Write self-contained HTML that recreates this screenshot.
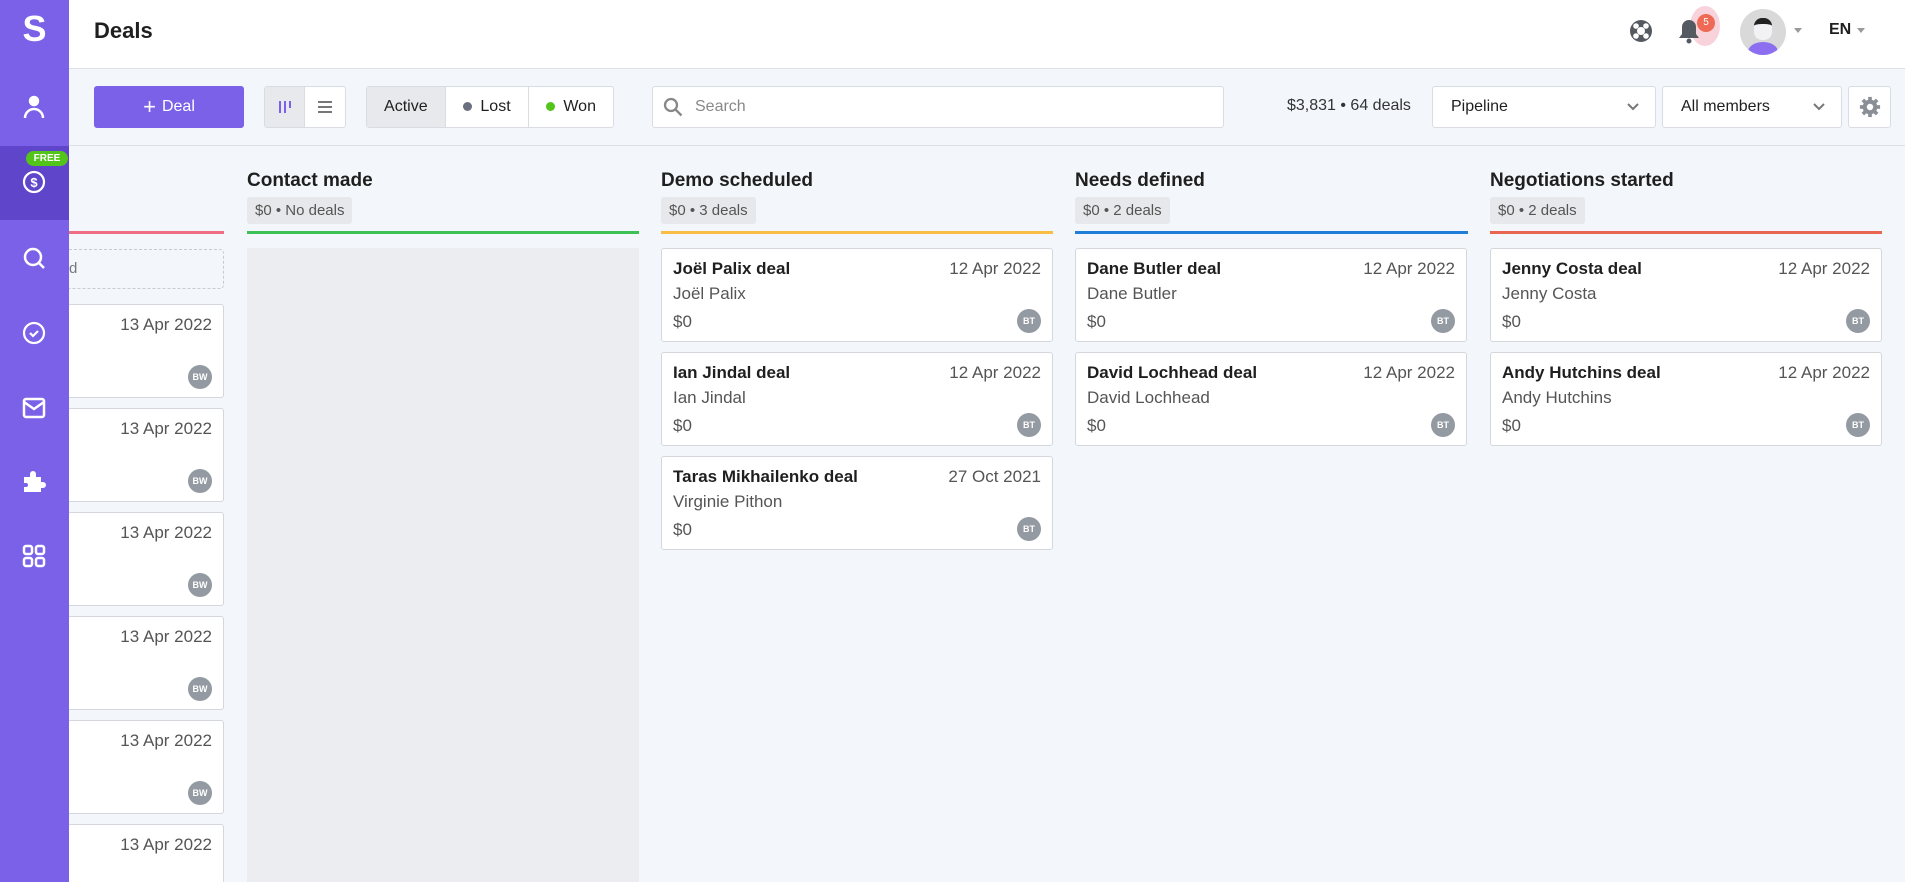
<!DOCTYPE html>
<html><head><meta charset="utf-8"><style>
*{box-sizing:border-box;margin:0;padding:0}
html,body{width:1905px;height:882px;overflow:hidden}
body{background:#f3f7fb;font-family:"Liberation Sans",sans-serif;color:#1f1f1f}
#w{position:relative;width:1905px;height:882px;overflow:hidden}
.sb{position:absolute;left:0;top:0;width:69px;height:882px;background:#7b61e8;z-index:20}
.sb .act{position:absolute;left:0;top:146px;width:69px;height:74px;background:#5f45c9}
.ic{position:absolute;left:22px}
.hdr{position:absolute;left:69px;top:0;width:1836px;height:69px;background:#fff;border-bottom:1px solid #dde1e6}
.tb{position:absolute;left:69px;top:69px;width:1836px;height:77px;border-bottom:1px solid #dde1e6}
.btn{position:absolute;top:86px;height:42px;border:1px solid #d9dde3;background:#fff;border-radius:3px;font-size:16px;display:flex;align-items:center}
.ct{position:absolute;top:170px;font-size:19px;font-weight:bold;color:#1f1f1f}
.badge{position:absolute;top:197px;height:27px;background:#e6e8eb;border-radius:3px;font-size:15px;color:#555;padding:0 8px;line-height:27px}
.line{position:absolute;top:231px;height:3px}
.card{position:absolute;width:392px;height:94px;background:#fff;border:1px solid #d4d7db;border-radius:3px}
.card .t{position:absolute;left:11px;top:10px;font-size:17px;font-weight:bold}
.card .d{position:absolute;right:11px;top:10px;font-size:17px;color:#555}
.card .s{position:absolute;left:11px;top:35px;font-size:17px;color:#555}
.card .m{position:absolute;left:11px;top:63px;font-size:17px;color:#555}
.card .a{position:absolute;right:11px;top:60px;width:24px;height:24px;border-radius:50%;background:#949aa1;color:#fff;font-size:9px;font-weight:bold;text-align:center;line-height:24px}
</style></head><body><div id="w">
<div class="hdr">
<div style="position:absolute;left:25px;top:18px;font-size:22px;font-weight:bold">Deals</div>
<svg style="position:absolute;left:1560px;top:19px" width="24" height="24" viewBox="0 0 24 24"><circle cx="12" cy="12" r="11" fill="#555a60"/><circle cx="12" cy="12" r="4" fill="#fff"/><circle cx="7" cy="7" r="2.8" fill="#fff"/><circle cx="17" cy="7" r="2.8" fill="#fff"/><circle cx="7" cy="17" r="2.8" fill="#fff"/><circle cx="17" cy="17" r="2.8" fill="#fff"/></svg>
<div style="position:absolute;left:1621px;top:6px;width:30px;height:40px;border-radius:50%;background:#f9d3db"></div>
<svg style="position:absolute;left:1609px;top:18px" width="22" height="26" viewBox="0 0 22 26"><path d="M11 2a7 7 0 0 1 7 7v7l3 4H1l3-4V9a7 7 0 0 1 7-7z" fill="#555a60"/><circle cx="11" cy="23" r="2.5" fill="#555a60"/></svg>
<div style="position:absolute;left:1628px;top:14px;width:18px;height:18px;border-radius:50%;background:#ee6a55;color:#fff;font-size:10px;text-align:center;line-height:18px">5</div>
<div style="position:absolute;left:1671px;top:9px;width:46px;height:46px;border-radius:50%;background:#d9d9d9;overflow:hidden"><div style="position:absolute;left:14px;top:9px;width:18px;height:22px;border-radius:8px;background:#f2f2f5;border-top:6px solid #222"></div><div style="position:absolute;left:8px;top:33px;width:30px;height:20px;border-radius:50%;background:#8b6ff0"></div></div>
<div style="position:absolute;left:1725px;top:28px;border:4px solid transparent;border-top:5px solid #999"></div>
<div style="position:absolute;left:1760px;top:21px;font-size:16px;font-weight:bold">EN</div>
<div style="position:absolute;left:1788px;top:28px;border:4px solid transparent;border-top:5px solid #999"></div>
</div>
<div class="tb"></div>
<div class="btn" style="left:94px;width:150px;background:#7b61e8;border-color:#7b61e8;color:#fff;justify-content:center"><span style="font-size:22px;margin-right:6px">+</span>Deal</div>
<div class="btn" style="left:264px;width:82px;padding:0"><div style="width:41px;height:40px;background:#e8e9ec;border-right:1px solid #d9dde3;display:flex;justify-content:center;align-items:center"><svg width="14" height="16" viewBox="0 0 14 16" stroke="#7b61e8" stroke-width="2"><path d="M2 2v12M7 2v12M12 2v7"/></svg></div><div style="width:41px;display:flex;justify-content:center"><svg width="16" height="14" viewBox="0 0 16 14" stroke="#777" stroke-width="2"><path d="M1 2h14M1 7h14M1 12h14"/></svg></div></div>
<div class="btn" style="left:366px;width:248px;padding:0"><div style="width:79px;height:40px;background:#e8e9ec;border-right:1px solid #d9dde3;text-align:center;line-height:40px">Active</div><div style="width:84px;height:40px;border-right:1px solid #d9dde3;text-align:center;line-height:40px"><span style="display:inline-block;width:9px;height:9px;border-radius:50%;background:#6b7080;margin-right:8px"></span>Lost</div><div style="width:84px;text-align:center"><span style="display:inline-block;width:9px;height:9px;border-radius:50%;background:#52c41a;margin-right:8px"></span>Won</div></div>
<div class="btn" style="left:652px;width:572px;color:#888"><svg style="margin:0 12px 0 10px" width="20" height="20" viewBox="0 0 20 20" fill="none" stroke="#888" stroke-width="2.3"><circle cx="8" cy="8" r="6"/><path d="M12.5 12.5l6 6"/></svg>Search</div>
<div style="position:absolute;left:1287px;top:97px;font-size:16px;color:#333">$3,831 • 64 deals</div>
<div class="btn" style="left:1432px;width:224px;padding-left:18px">Pipeline<svg style="position:absolute;right:16px" width="12" height="8" viewBox="0 0 12 8" fill="none" stroke="#777" stroke-width="2"><path d="M1 1l5 5 5-5"/></svg></div>
<div class="btn" style="left:1662px;width:180px;padding-left:18px">All members<svg style="position:absolute;right:16px" width="12" height="8" viewBox="0 0 12 8" fill="none" stroke="#777" stroke-width="2"><path d="M1 1l5 5 5-5"/></svg></div>
<div class="btn" style="left:1848px;width:43px;justify-content:center"><svg width="22" height="22" viewBox="0 0 24 24"><g fill="#8a8f96"><circle cx="12" cy="12" r="8"/><rect x="10" y="1" width="4" height="22"/><rect x="1" y="10" width="22" height="4"/><rect x="10" y="1" width="4" height="22" transform="rotate(45 12 12)"/><rect x="10" y="1" width="4" height="22" transform="rotate(-45 12 12)"/></g><circle cx="12" cy="12" r="3.5" fill="#fff"/></svg></div>

<div class="line" style="left:69px;width:155px;background:#ef6e82"></div>
<div style="position:absolute;left:40px;top:249px;width:184px;height:40px;border:1px dashed #c8ccd2;border-radius:4px;font-size:15px;color:#777;padding:10px 0 0 28px">d</div>
<div class="card" style="left:-168px;top:304px"><div class="d">13 Apr 2022</div><div class="a">BW</div></div>
<div class="card" style="left:-168px;top:408px"><div class="d">13 Apr 2022</div><div class="a">BW</div></div>
<div class="card" style="left:-168px;top:512px"><div class="d">13 Apr 2022</div><div class="a">BW</div></div>
<div class="card" style="left:-168px;top:616px"><div class="d">13 Apr 2022</div><div class="a">BW</div></div>
<div class="card" style="left:-168px;top:720px"><div class="d">13 Apr 2022</div><div class="a">BW</div></div>
<div class="card" style="left:-168px;top:824px"><div class="d">13 Apr 2022</div><div class="a">BW</div></div>

<div class="sb">
<div class="act"></div>
<div style="position:absolute;left:0;top:8px;width:69px;text-align:center;color:#fff;font-size:36px;font-weight:bold">S</div>
<svg class="ic" style="top:94px" width="24" height="26" viewBox="0 0 24 26" fill="none" stroke="#fff" stroke-width="2.5"><circle cx="12" cy="7" r="4" fill="#fff"/><path d="M3 24a9 9 0 0 1 18 0"/></svg>
<div style="position:absolute;left:26px;top:151px;width:42px;height:15px;background:#52c41a;border-radius:8px;color:#fff;font-size:10px;font-weight:bold;text-align:center;line-height:15px">FREE</div>
<svg class="ic" style="top:170px" width="24" height="24" viewBox="0 0 24 24" fill="none" stroke="#fff" stroke-width="2.2"><circle cx="12" cy="12" r="10"/><text x="12" y="17" text-anchor="middle" fill="#fff" stroke="none" font-size="13" font-weight="bold" font-family="Liberation Sans">$</text></svg>
<svg class="ic" style="top:246px" width="24" height="24" viewBox="0 0 24 24" fill="none" stroke="#fff" stroke-width="2.5"><circle cx="11" cy="11" r="8"/><path d="M17 17l5 5"/></svg>
<svg class="ic" style="top:321px" width="24" height="24" viewBox="0 0 24 24" fill="none" stroke="#fff" stroke-width="2.2"><circle cx="12" cy="12" r="10"/><path d="M8 12l3 3 5-5"/></svg>
<svg class="ic" style="top:397px" width="24" height="22" viewBox="0 0 24 22" fill="none" stroke="#fff" stroke-width="2.5"><rect x="2" y="2" width="20" height="18" rx="2"/><path d="M2 5l10 7 10-7"/></svg>
<svg class="ic" style="top:470px" width="24" height="24" viewBox="0 0 24 24" fill="#fff"><path d="M2 7h6V4a3 3 0 0 1 6 0v3h5v5h2a3 3 0 0 1 0 6h-2v4H2v-5h2a2 2 0 0 0 0-4H2z"/></svg>
<svg class="ic" style="top:544px" width="24" height="24" viewBox="0 0 24 24" fill="none" stroke="#fff" stroke-width="2.5"><rect x="2" y="2" width="8" height="8" rx="2"/><rect x="14" y="2" width="8" height="8" rx="2"/><rect x="2" y="14" width="8" height="8" rx="2"/><rect x="14" y="14" width="8" height="8" rx="2"/></svg>
</div>

<div class="ct" style="left:247px">Contact made</div>
<div class="badge" style="left:247px">$0 • No deals</div>
<div class="line" style="left:247px;width:392px;background:#3cc157"></div>
<div style="position:absolute;left:247px;top:248px;width:392px;height:640px;background:#ebedf0"></div>

<div class="ct" style="left:661px">Demo scheduled</div>
<div class="badge" style="left:661px">$0 • 3 deals</div>
<div class="line" style="left:661px;width:392px;background:#f7bd45"></div>
<div class="card" style="left:661px;top:248px"><div class="t">Joël Palix deal</div><div class="d">12 Apr 2022</div><div class="s">Joël Palix</div><div class="m">$0</div><div class="a">BT</div></div>
<div class="card" style="left:661px;top:352px"><div class="t">Ian Jindal deal</div><div class="d">12 Apr 2022</div><div class="s">Ian Jindal</div><div class="m">$0</div><div class="a">BT</div></div>
<div class="card" style="left:661px;top:456px"><div class="t">Taras Mikhailenko deal</div><div class="d">27 Oct 2021</div><div class="s">Virginie Pithon</div><div class="m">$0</div><div class="a">BT</div></div>

<div class="ct" style="left:1075px">Needs defined</div>
<div class="badge" style="left:1075px">$0 • 2 deals</div>
<div class="line" style="left:1075px;width:393px;background:#1f7fd8"></div>
<div class="card" style="left:1075px;top:248px"><div class="t">Dane Butler deal</div><div class="d">12 Apr 2022</div><div class="s">Dane Butler</div><div class="m">$0</div><div class="a">BT</div></div>
<div class="card" style="left:1075px;top:352px"><div class="t">David Lochhead deal</div><div class="d">12 Apr 2022</div><div class="s">David Lochhead</div><div class="m">$0</div><div class="a">BT</div></div>

<div class="ct" style="left:1490px">Negotiations started</div>
<div class="badge" style="left:1490px">$0 • 2 deals</div>
<div class="line" style="left:1490px;width:392px;background:#e8664f"></div>
<div class="card" style="left:1490px;top:248px"><div class="t">Jenny Costa deal</div><div class="d">12 Apr 2022</div><div class="s">Jenny Costa</div><div class="m">$0</div><div class="a">BT</div></div>
<div class="card" style="left:1490px;top:352px"><div class="t">Andy Hutchins deal</div><div class="d">12 Apr 2022</div><div class="s">Andy Hutchins</div><div class="m">$0</div><div class="a">BT</div></div>
</div></body></html>
